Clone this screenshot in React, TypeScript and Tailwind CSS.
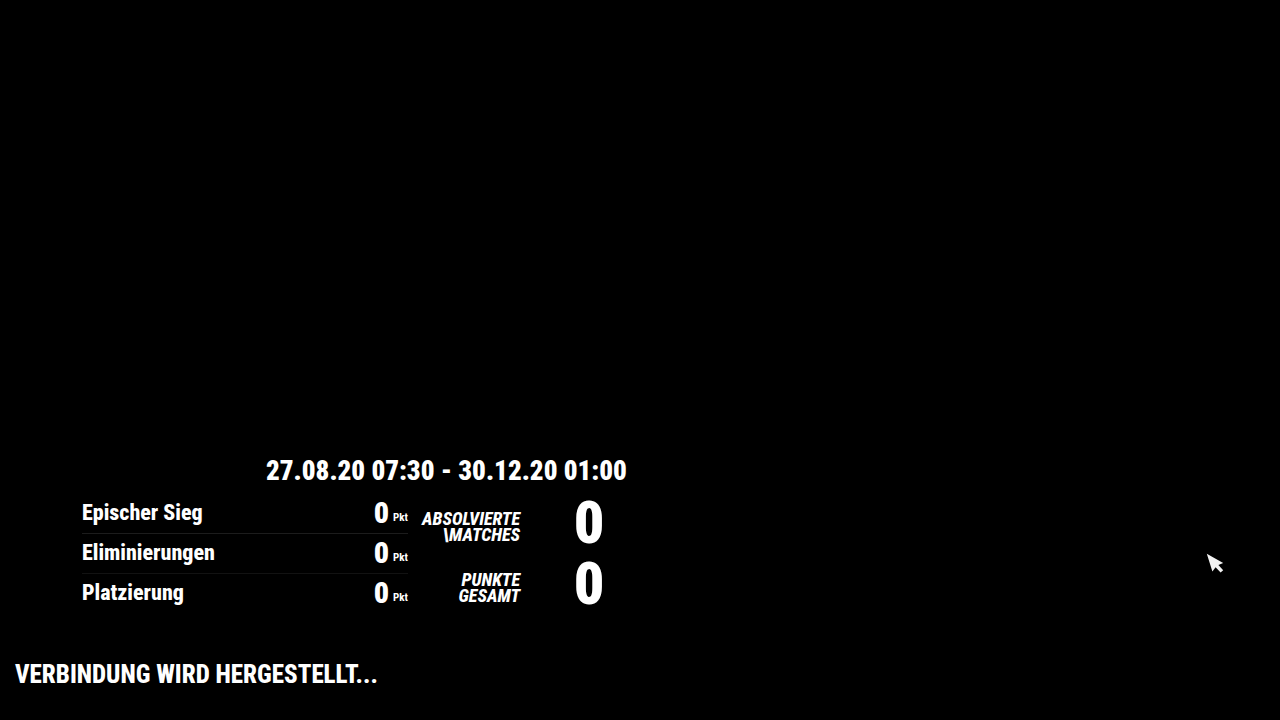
interface Rule {
  label: string
  points: number
}

const rules: Rule[] = [
  { label: "Epischer Sieg", points: 0 },
  { label: "Eliminierungen", points: 0 },
  { label: "Platzierung", points: 0 },
]

const totals = [
  { lines: ["ABSOLVIERTE", "\\MATCHES"], value: 0 },
  { lines: ["PUNKTE", "GESAMT"], value: 0 },
]

function RulesTable() {
  return (
    <table className="w-[326px] border-collapse">
      <tbody>
        {rules.map(r => (
          <tr key={r.label} className="h-10 border-b border-[#1c1c1c] last:border-b-0 nth-2:border-[#121212]">
            <th scope="row" className="p-0 text-left text-[22px] leading-6 font-extrabold">
              {r.label}
            </th>
            <td className="p-0">
              <div className="flex items-end justify-end gap-1">
                <span className="text-3xl leading-8 font-black">{r.points}</span>
                <span className="text-[11px] leading-[22px] font-bold">Pkt</span>
              </div>
            </td>
          </tr>
        ))}
      </tbody>
    </table>
  )
}

function Totals() {
  return (
    <dl className="flex flex-col">
      {totals.map(t => (
        <div key={t.lines[0]} className="flex h-[61px] items-center">
          <dt className="w-28 pt-1.5 text-right text-lg leading-4 font-extrabold italic">
            {t.lines.map(line => (
              <span key={line} className="block">{line}</span>
            ))}
          </dt>
          <dd className="w-[138px] pb-0.5 text-center text-6xl leading-none font-black">{t.value}</dd>
        </div>
      ))}
    </dl>
  )
}

// Mouse pointer floating over the screen
function Cursor() {
  return (
    <svg className="absolute top-[553px] left-[1206px] h-5 w-[18px]" viewBox="0 0 18 20" fill="#f2f2f2" aria-hidden="true">
      <path d="M0.8 0.8 L17.2 10 L12.4 12 L17.2 17.2 L14.6 19.6 L9.6 14.2 L6.4 18.4 Z" />
    </svg>
  )
}

export default function App() {
  return (
    <main className="relative flex min-h-screen flex-col justify-end overflow-hidden bg-black font-['Roboto_Condensed',Roboto,sans-serif] text-white">
      <section className="flex w-fit flex-col pl-[82px]">
        <h1 className="mb-1.5 pl-[184px] text-[27px] leading-8 font-black whitespace-nowrap">
          27.08.20 07:30 - 30.12.20 01:00
        </h1>
        <div className="flex items-start">
          <RulesTable />
          <Totals />
        </div>
      </section>
      <p role="status" className="mt-11 mb-[29px] pl-[15px] text-[25px] leading-8 font-extrabold">
        VERBINDUNG WIRD HERGESTELLT...
      </p>
      <Cursor />
    </main>
  )
}
